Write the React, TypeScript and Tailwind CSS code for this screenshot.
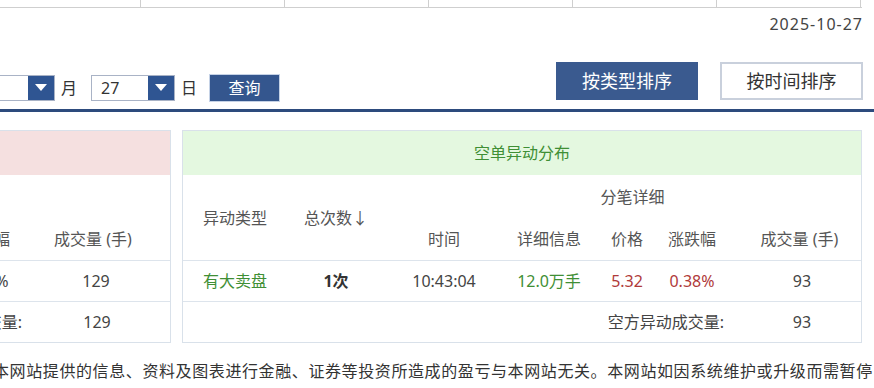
const font = "font-['Noto_Sans','Noto_Sans_CJK_SC',sans-serif]";

function Select({ value, className }: { value: string; className?: string }) {
  return (
    <div className={`flex h-[26px] w-[84px] border border-[#a9b3c6] bg-white ${className ?? ""}`}>
      <div className="flex flex-1 items-center pl-[9px] text-[16px] text-[#333]">{value}</div>
      <div className="flex w-[26px] items-center justify-center bg-[#2f5592]">
        <svg width="12" height="8" viewBox="0 0 12 8">
          <path d="M0 0 L12 0 L6 7 Z" fill="#fff" />
        </svg>
      </div>
    </div>
  );
}

const cols = [141, 144, 144, 144, 144, 144];

export default function App() {
  return (
    <div className={`relative h-[388px] w-[874px] overflow-hidden bg-white ${font}`}>
      {/* top table remainder */}
      <div className="flex h-[8px] w-[862px] border-b border-[#cfcfcf]">
        {cols.map((w, i) => (
          <div key={i} style={{ width: w }} className="h-full border-r border-[#cfcfcf]" />
        ))}
      </div>

      <div className="mt-[5px] w-[863px] text-right text-[16px] leading-[22px] tracking-[1px] text-[#444]">2025-10-27</div>

      {/* controls */}
      <div className="mt-[27px] flex h-[41px] w-[863px] items-end justify-between">
        <div className="mb-[1px] ml-[-29px] flex items-center">
          <Select value="10" />
          <span className="ml-[6px] text-[16px] text-[#333]">月</span>
          <Select value="27" className="ml-[14px]" />
          <span className="ml-[6px] text-[16px] text-[#333]">日</span>
          <button className="ml-[12px] h-[28px] w-[71px] border border-[#c5d2e6] bg-[#34568e] text-[16px] text-white">
            查询
          </button>
        </div>
        <div className="mb-[3px] flex gap-[22px]">
          <button className="h-[38px] w-[142px] bg-[#3a5a8f] text-[18px] text-white">按类型排序</button>
          <button className="h-[38px] w-[143px] border-2 border-[#c9d0dc] bg-white text-[18px] text-[#333]">
            按时间排序
          </button>
        </div>
      </div>

      <div className="mt-[6px] h-[3px] w-[874px] bg-[#2d4b7d]" />

      {/* panels */}
      <div className="ml-[-509px] mt-[18px] flex gap-[11px]">
        {/* left panel: 多单 */}
        <div className="w-[680px] border border-[#d9e1ea]">
          <div className="flex h-[44px] items-center justify-center bg-[#f5e0e0] text-[16px] text-[#b03a3a]">
            多单异动分布
          </div>
          <div className="grid grid-cols-[100px_98px_118px_82px_60px_72px_148px] grid-rows-[43px_42px] text-[16px] text-[#555]">
            <div className="row-span-2 flex items-center justify-center">异动类型</div>
            <div className="row-span-2 flex items-center justify-center">总次数↓</div>
            <div className="col-span-5 flex items-center justify-center">分笔详细</div>
            <div className="flex items-center justify-center">时间</div>
            <div className="flex items-center justify-center">详细信息</div>
            <div className="flex items-center justify-center">价格</div>
            <div className="flex items-center justify-center">涨跌幅</div>
            <div className="flex items-center justify-center pr-[6px]">成交量 (手)</div>
          </div>
          <div className="grid h-[41px] grid-cols-[100px_98px_118px_82px_60px_72px_148px] border-t border-[#dde4ec] text-[16px] text-[#444]">
            <div className="flex items-center justify-center text-[#b03a3a]">有大买盘</div>
            <div className="flex items-center justify-center font-bold text-[#333]">1次</div>
            <div className="flex items-center justify-center">10:38:12</div>
            <div className="flex items-center justify-center text-[#b03a3a]">12.9万手</div>
            <div className="flex items-center justify-center text-[#b03a3a]">5.31</div>
            <div className="flex items-center justify-center">0.00%</div>
            <div className="flex items-center justify-center">129</div>
          </div>
          <div className="grid h-[41px] grid-cols-[532px_146px] border-t border-[#dde4ec] text-[16px] text-[#444]">
            <div className="flex items-center justify-end pr-[2px]">多方异动成交量:</div>
            <div className="flex items-center justify-center">129</div>
          </div>
        </div>

        {/* right panel: 空单 */}
        <div className="w-[680px] border border-[#d9e1ea]">
          <div className="flex h-[44px] items-center justify-center bg-[#e4f8e0] text-[16px] text-[#3f8f35]">
            空单异动分布
          </div>
          <div className="grid grid-cols-[104px_98px_118px_92px_64px_66px_136px] grid-rows-[43px_42px] text-[16px] text-[#555]">
            <div className="row-span-2 flex items-center justify-center">异动类型</div>
            <div className="row-span-2 flex items-center justify-center">总次数↓</div>
            <div className="col-span-5 flex items-center justify-center pl-[19px]">分笔详细</div>
            <div className="flex items-center justify-center">时间</div>
            <div className="flex items-center justify-center">详细信息</div>
            <div className="flex items-center justify-center">价格</div>
            <div className="flex items-center justify-center">涨跌幅</div>
            <div className="flex items-center justify-center pl-[13px]">成交量 (手)</div>
          </div>
          <div className="grid h-[41px] grid-cols-[104px_98px_118px_92px_64px_66px_136px] border-t border-[#dde4ec] text-[16px] text-[#444]">
            <div className="flex items-center justify-center text-[#3f8f35]">有大卖盘</div>
            <div className="flex items-center justify-center font-bold text-[#333]">1次</div>
            <div className="flex items-center justify-center">10:43:04</div>
            <div className="flex items-center justify-center text-[#3f8f35]">12.0万手</div>
            <div className="flex items-center justify-center text-[#b03a3a]">5.32</div>
            <div className="flex items-center justify-center text-[#b03a3a]">0.38%</div>
            <div className="flex items-center justify-center pl-[18px]">93</div>
          </div>
          <div className="grid h-[41px] grid-cols-[542px_136px] border-t border-[#dde4ec] text-[16px] text-[#444]">
            <div className="flex items-center justify-end pr-[1px]">空方异动成交量:</div>
            <div className="flex items-center justify-center pl-[18px]">93</div>
          </div>
        </div>
      </div>

      <p className="ml-[-7px] mt-[16px] whitespace-nowrap text-[16px] leading-[24px] tracking-[0.6px] text-[#333]">
        本网站提供的信息、资料及图表进行金融、证券等投资所造成的盈亏与本网站无关。本网站如因系统维护或升级而需暂停
      </p>
    </div>
  );
}
